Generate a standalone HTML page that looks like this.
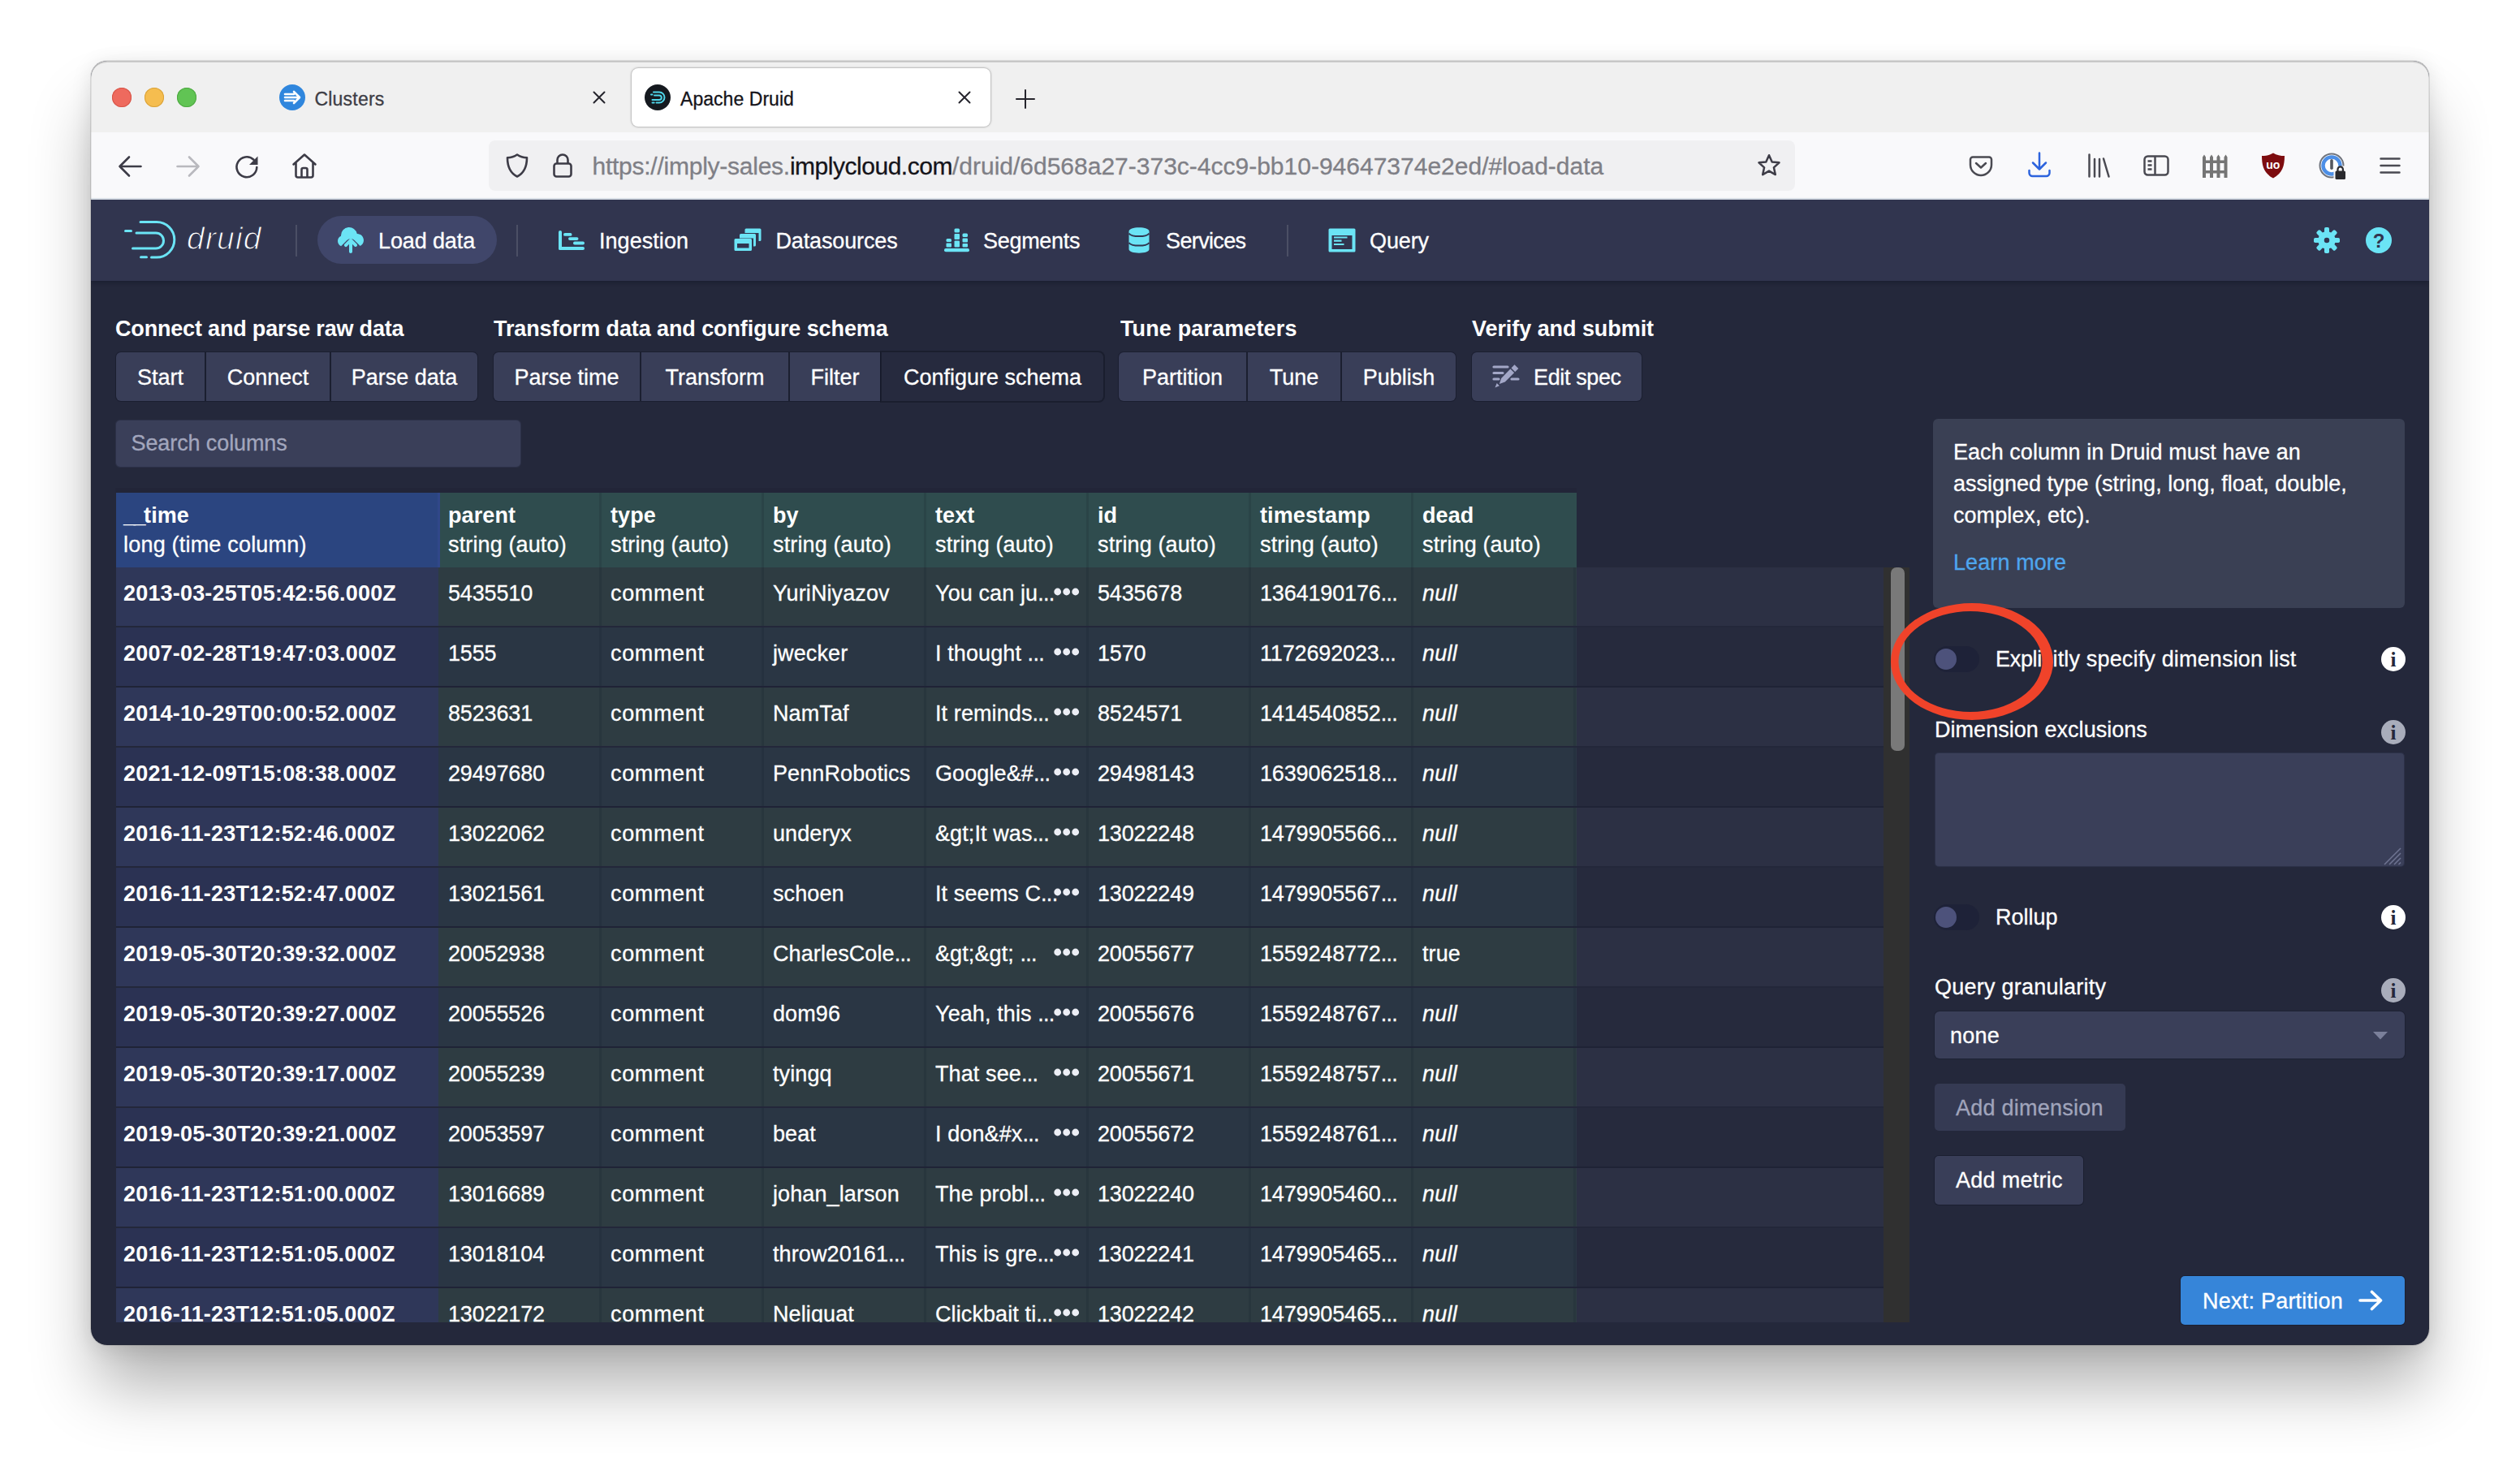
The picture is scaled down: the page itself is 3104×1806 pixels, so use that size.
<!DOCTYPE html>
<html lang="en">
<head>
<meta charset="utf-8">
<title>Apache Druid</title>
<style>
*{box-sizing:border-box}
html,body{margin:0;padding:0}
body{width:3104px;height:1806px;background:#fff;overflow:hidden;position:relative;font-family:"Liberation Sans",sans-serif;font-size:27px;color:#fff}
.a{position:absolute}
.t{position:absolute;white-space:pre;line-height:1;-webkit-text-stroke:.3px currentColor}
.win{position:absolute;left:112px;top:75px;width:2880px;height:1582px;border-radius:20px;overflow:hidden;background:#24283b}
.shadow{position:absolute;left:112px;top:75px;width:2880px;height:1582px;border-radius:20px;box-shadow:0 0 0 1px rgba(0,0,0,.10),0 56px 80px -6px rgba(0,0,0,.31),0 4px 26px rgba(0,0,0,.11)}
.o{position:absolute;left:-112px;top:-75px;width:3104px;height:1806px}
.tabbar{left:112px;top:75px;width:2880px;height:88px;background:#f0f0f0}
.navbar{left:112px;top:163px;width:2880px;height:83px;background:#f9f9fb;border-bottom:2px solid #dfe6ee}
.chrome{font-size:23px;color:#15141a}
.hdr{left:112px;top:246px;width:2880px;height:100px;background:#31354f;box-shadow:0 2px 5px rgba(10,12,25,.35)}
.btn{position:absolute;height:60px;top:433px;background:#393e58;border-radius:4px;box-shadow:0 0 0 1px rgba(16,22,38,.45)}
.btn .t{top:17px}
</style>
</head>
<body>
<div class="shadow"></div>
<div class="win"><div class="o">

<!-- ===== browser chrome ===== -->
<div class="a tabbar"></div>
<div class="a navbar"></div>
<div class="a" style="left:138px;top:108px;width:24px;height:24px;border-radius:50%;background:#ee6a5e;box-shadow:inset 0 0 0 1px #d65548"></div>
<div class="a" style="left:178px;top:108px;width:24px;height:24px;border-radius:50%;background:#f5bd4f;box-shadow:inset 0 0 0 1px #d9a23a"></div>
<div class="a" style="left:218px;top:108px;width:24px;height:24px;border-radius:50%;background:#61c454;box-shadow:inset 0 0 0 1px #4ea842"></div>
<svg class="a" style="left:344px;top:104px" width="32" height="32" viewBox="0 0 32 32"><circle cx="16" cy="16" r="16" fill="#2f86dd"/><g stroke="#fff" stroke-width="2.6" stroke-linecap="round" stroke-linejoin="round" fill="none"><path d="M7 12h11M7 16h17M7 20h11M18 9l7 7-7 7"/></g></svg>
<div class="t chrome" style="left:387.5px;top:111.2px;font-size:23px;color:#3d3d45;letter-spacing:0.2px;">Clusters</div>
<svg class="a" style="left:729.5px;top:112px;" width="16" height="16" viewBox="0 0 16 16"><path d="M1.5 1.5l13 13M14.5 1.5l-13 13" stroke="#26252d" stroke-width="2" stroke-linecap="round" fill="none"/></svg>
<div class="a" style="left:778px;top:84px;width:442px;height:72px;border-radius:8px;background:#fff;box-shadow:0 0 3px rgba(0,0,0,.38),0 0 0 1px rgba(0,0,0,.05)"></div>
<svg class="a" style="left:793.5px;top:104px" width="32" height="32" viewBox="0 0 32 32"><circle cx="16" cy="16" r="16" fill="#15191f"/><g stroke="#4fd6ea" stroke-width="2" stroke-linecap="round" fill="none"><path d="M11 9.5h7a6.5 6.5 0 0 1 0 13h-3.500M8 12.500h1.500M12 13.500h6a2.800 2.800 0 0 1 0 5.600H9.500M9.500 22.500h2.200"/></g></svg>
<div class="t chrome" style="left:838px;top:111.2px;font-size:23px;color:#15141a;letter-spacing:0.05px;">Apache Druid</div>
<svg class="a" style="left:1180px;top:112px;" width="16" height="16" viewBox="0 0 16 16"><path d="M1.5 1.5l13 13M14.5 1.5l-13 13" stroke="#26252d" stroke-width="2" stroke-linecap="round" fill="none"/></svg>
<svg class="a" style="left:1251px;top:109.5px;" width="24" height="24" viewBox="0 0 24 24"><path d="M12 1v22M1 12h22" stroke="#26252d" stroke-width="2" stroke-linecap="round" fill="none"/></svg>
<svg class="a" style="left:144px;top:189px" width="32" height="32" viewBox="0 0 32 32"><path d="M29.500 16H3.500M15 4.500L3.500 16 15 27.500" stroke="#3d3c47" stroke-width="2.600" stroke-linecap="round" stroke-linejoin="round" fill="none"/></svg>
<svg class="a" style="left:216px;top:189px" width="32" height="32" viewBox="0 0 32 32"><path d="M2.500 16h26M17 4.500L28.500 16 17 27.500" stroke="#b9b9be" stroke-width="2.600" stroke-linecap="round" stroke-linejoin="round" fill="none"/></svg>
<svg class="a" style="left:288px;top:189px" width="32" height="32" viewBox="0 0 32 32"><path d="M28.300 17A12.400 12.400 0 1 1 24.500 7.800" stroke="#3d3c47" stroke-width="2.600" stroke-linecap="round" fill="none"/><path d="M29.500 3.500v10.500h-10.500z" fill="#3d3c47"/></svg>
<svg class="a" style="left:359px;top:188px" width="32" height="32" viewBox="0 0 32 32"><path d="M2.500 14.500L16 2.500l13.500 12M5.500 12.500v15.500a2.500 2.500 0 0 0 2.500 2.500h16a2.500 2.500 0 0 0 2.500-2.500V12.500M12.500 30.500v-9.500a2 2 0 0 1 2-2h3a2 2 0 0 1 2 2v9.500" stroke="#3d3c47" stroke-width="2.600" stroke-linecap="round" stroke-linejoin="round" fill="none"/></svg>
<div class="a" style="left:602px;top:173px;width:1609px;height:62px;border-radius:8px;background:#f0f0f2"></div>
<svg class="a" style="left:621px;top:188px" width="32" height="32" viewBox="0 0 32 32"><path d="M16 2.500c4 2.800 8 3.700 12 3.800 0 10.500-2.500 18.500-12 23.200C6.500 24.800 4 16.800 4 6.300c4-.1 8-1 12-3.800z" stroke="#3d3c47" stroke-width="2.600" stroke-linejoin="round" fill="none"/></svg>
<svg class="a" style="left:676.5px;top:188px" width="32" height="32" viewBox="0 0 32 32"><rect x="5.500" y="13.500" width="21" height="16" rx="3" stroke="#3d3c47" stroke-width="2.600" fill="none"/><path d="M9.500 13.500V9a6.500 6.500 0 0 1 13 0v4.500" stroke="#3d3c47" stroke-width="2.600" fill="none"/></svg>
<div class="t chrome" style="left:729.5px;top:189.8px;font-size:30px;"><span style="color:#7f7f86;letter-spacing:-.25px">https://imply-sales.</span><span style="color:#15141a;letter-spacing:-.48px">implycloud.com</span><span style="color:#7f7f86">/druid/6d568a27-373c-4cc9-bb10-94647374e2ed/#load-data</span></div>
<svg class="a" style="left:2163px;top:188px" width="32" height="32" viewBox="0 0 32 32"><path d="M16 3.200l3.700 8.200 8.800.9-6.600 6 1.900 8.800L16 22.600l-7.800 4.500 1.900-8.800-6.600-6 8.800-.9z" stroke="#3d3c47" stroke-width="2.500" stroke-linejoin="round" fill="none"/></svg>
<svg class="a" style="left:2424px;top:188px" width="32" height="32" viewBox="0 0 32 32"><path d="M6 5.500h20a3 3 0 0 1 3 3v6.500a13 13 0 0 1-26 0V8.500a3 3 0 0 1 3-3z" stroke="#4a4a52" stroke-width="2.500" fill="none"/><path d="M10 13l6 5.500 6-5.500" stroke="#4a4a52" stroke-width="2.500" stroke-linecap="round" stroke-linejoin="round" fill="none"/></svg>
<svg class="a" style="left:2496px;top:186px" width="32" height="34" viewBox="0 0 32 34"><path d="M16 2.500v19.500M8 14.500l8 8 8-8" stroke="#2c63dd" stroke-width="2.500" stroke-linecap="round" stroke-linejoin="round" fill="none"/><path d="M3.500 24v3a4 4 0 0 0 4 4h17a4 4 0 0 0 4-4v-3" stroke="#2c63dd" stroke-width="2.500" stroke-linecap="round" fill="none"/></svg>
<svg class="a" style="left:2569px;top:188px" width="32" height="32" viewBox="0 0 32 32"><path d="M4.500 2.500v27M11 8v21.500M17 8v21.500M22 7.500l6.500 22" stroke="#4a4a52" stroke-width="2.500" stroke-linecap="round" fill="none"/></svg>
<svg class="a" style="left:2640px;top:191px" width="32" height="26" viewBox="0 0 32 26"><rect x="1.500" y="1.500" width="29" height="23" rx="4" stroke="#4a4a52" stroke-width="2.500" fill="none"/><path d="M14.500 2v22M5.500 7.500h5M5.500 12.500h5M5.500 17.500h5" stroke="#4a4a52" stroke-width="2.500" fill="none"/></svg>
<svg class="a" style="left:2712px;top:190px" width="32" height="30" viewBox="0 0 32 30"><g fill="#757575"><path d="M1 3.500L3 .5l2 3V29H1zM10 3.500l2-3 2 3V29h-4zM18.500 3.500l2-3 2 3V29h-4zM27.500 3.500l2-3 2 3V29h-4z"/><rect x="1" y="7.500" width="30" height="3.500"/><rect x="1" y="20" width="30" height="3.500"/></g></svg>
<svg class="a" style="left:2785px;top:188px" width="30" height="32" viewBox="0 0 30 32"><path d="M15 .5c4.500 2.800 9 3.600 14 3.600 0 12-2.500 21.500-14 27.400C3.500 25.600 1 16.100 1 4.100c5 0 9.500-.8 14-3.600z" fill="#7d0c0f"/><text x="14.800" y="19.800" text-anchor="middle" style="font-family:Liberation Sans,sans-serif" font-weight="700" font-size="14" fill="#fff">uo</text></svg>
<svg class="a" style="left:2855px;top:187px" width="36" height="36" viewBox="0 0 36 36"><circle cx="17" cy="17" r="14.500" stroke="#6f737c" stroke-width="2" fill="#fff"/><circle cx="17" cy="17" r="10.500" stroke="#4d8fe6" stroke-width="4.500" fill="#fff"/><rect x="15.200" y="9" width="3.600" height="13" rx="1.800" fill="#55585f"/><rect x="19.500" y="17.500" width="16" height="17" fill="#f9f9fb"/><rect x="21.500" y="23.500" width="12.500" height="10.500" rx="1.500" fill="#2a2a2e"/><path d="M24.500 24v-2.500a3.200 3.200 0 0 1 6.400 0V24" stroke="#2a2a2e" stroke-width="2.200" fill="none"/></svg>
<svg class="a" style="left:2931px;top:193px" width="26" height="22" viewBox="0 0 26 22"><path d="M1.500 2.500h23M1.500 11h23M1.500 19.500h23" stroke="#4a4a52" stroke-width="2.500" stroke-linecap="round" fill="none"/></svg>

<!-- ===== druid header ===== -->
<div class="a hdr"></div>
<svg class="a" style="left:150px;top:268px" width="72" height="54" viewBox="0 0 72 54"><g stroke="#6be4f5" stroke-width="3" stroke-linecap="round" fill="none"><path d="M23 5.500h20a21.800 21.800 0 0 1 0 43.600H36.500"/><path d="M18 19h24a9.500 9.500 0 0 1 0 19H13.500"/><path d="M4.500 16.500h7"/><path d="M23.500 48.800h7"/></g></svg>
<div class="t" style="left:230px;top:274.2px;font-size:39px;color:#fff;font-style:italic;letter-spacing:1.2px;-webkit-text-stroke:1.1px #31354f;">druid</div>
<div class="a" style="left:364px;top:277px;width:2px;height:39px;background:rgba(255,255,255,.13);"></div>
<div class="a" style="left:636px;top:277px;width:2px;height:39px;background:rgba(255,255,255,.13);"></div>
<div class="a" style="left:1585px;top:277px;width:2px;height:39px;background:rgba(255,255,255,.13);"></div>
<div class="a" style="left:391px;top:266px;width:221px;height:59px;background:#40466a;border-radius:30px;"></div>
<svg class="a" style="left:416px;top:280px" width="32" height="32" viewBox="0 0 16 16"><path fill="#6be4f5" d="M8.710 7.290C8.530 7.110 8.280 7 8 7s-.530.110-.710.290l-3 3a1.003 1.003 0 0 0 1.420 1.420L7 10.410V15c0 .550.450 1 1 1s1-.450 1-1v-4.590l1.290 1.290c.180.190.430.300.710.300a1.003 1.003 0 0 0 .710-1.710l-3-3zM12 4c-.030 0-.070 0-.100.010A5 5 0 0 0 2 5c0 .110.010.220.020.330A3.510 3.510 0 0 0 0 8.500c0 1.410.840 2.610 2.030 3.170L4.200 9.500c.950-.950 2.260-2.500 3.800-2.500s2.850 1.550 3.800 2.500l2.020 2.020C15.090 10.910 16 9.560 16 8c0-2.210-1.790-4-4-4z"/></svg>
<div class="t" style="left:466px;top:283.9px;letter-spacing:-0.12px;">Load data</div>
<svg class="a" style="left:688px;top:280px" width="32" height="32" viewBox="0 0 32 32"><g fill="#6be4f5"><rect x="0" y="4" width="4" height="24" rx="2"/><rect x="0" y="24" width="32" height="4" rx="2"/><rect x="6" y="7" width="10.500" height="3.800" rx="1.900"/><rect x="12" y="12.200" width="12.500" height="3.800" rx="1.900"/><rect x="18" y="17.600" width="14" height="3.800" rx="1.900"/></g></svg>
<div class="t" style="left:738px;top:283.9px;letter-spacing:0.05px;">Ingestion</div>
<svg class="a" style="left:904px;top:280px" width="34" height="30" viewBox="0 0 34 30"><g fill="#6be4f5"><path d="M15 1.500h17a1.500 1.500 0 0 1 1.500 1.500v12.500a1.500 1.500 0 0 1-1.500 1.500h-1.500V7H13.500V3a1.500 1.500 0 0 1 1.500-1.500z"/><path d="M8.500 8h17a1.500 1.500 0 0 1 1.500 1.500v12.500a1.500 1.500 0 0 1-1.500 1.500h-1.500V13.500H7V9.500a1.500 1.500 0 0 1 1.500-1.500z"/><path fill-rule="evenodd" d="M2 14h18.500a1.500 1.500 0 0 1 1.500 1.500v12a1.500 1.500 0 0 1-1.500 1.500H2a1.500 1.500 0 0 1-1.500-1.500v-12A1.500 1.500 0 0 1 2 14zm2 6v5.500h14.500V20z"/></g></svg>
<div class="t" style="left:955.5px;top:283.9px;letter-spacing:-0.14px;">Datasources</div>
<svg class="a" style="left:1163px;top:280px" width="32" height="32" viewBox="0 0 32 32"><g fill="#6be4f5"><rect x="0" y="26" width="31" height="4.200" rx="2"/><rect x="2.500" y="14" width="6.500" height="4" rx="1.500"/><rect x="2.500" y="19.500" width="6.500" height="5" rx="1"/><rect x="12.500" y="1.500" width="6.500" height="5" rx="1.500"/><rect x="12.500" y="8" width="6.500" height="7" rx="1"/><rect x="12.500" y="16.500" width="6.500" height="8" rx="1"/><rect x="22.500" y="7.500" width="6.500" height="4.500" rx="1.500"/><rect x="22.500" y="13.500" width="6.500" height="5" rx="1"/><rect x="22.500" y="20" width="6.500" height="4.500" rx="1"/></g></svg>
<div class="t" style="left:1211px;top:283.9px;letter-spacing:-0.3px;">Segments</div>
<svg class="a" style="left:1390px;top:280px" width="26" height="32" viewBox="0 0 26 32"><path fill="#6be4f5" d="M.500 5C.500 2.200 6 .300 13 .300S25.500 2.200 25.500 5v22c0 2.800-5.500 4.700-12.500 4.700S.500 29.800.500 27z"/><path d="M.500 7.500c2 2.600 7 3.600 12.500 3.600s10.500-1 12.500-3.600M.500 19c2 2.600 7 3.600 12.500 3.600s10.500-1 12.500-3.600" stroke="#31354f" stroke-width="2" fill="none"/></svg>
<div class="t" style="left:1436px;top:283.9px;letter-spacing:-0.63px;">Services</div>
<svg class="a" style="left:1636px;top:281px" width="34" height="30" viewBox="0 0 34 30"><path fill="#6be4f5" fill-rule="evenodd" d="M2 .500h30a1.500 1.500 0 0 1 1.500 1.500v26a1.500 1.500 0 0 1-1.500 1.500H2A1.500 1.500 0 0 1 .500 28V2A1.500 1.500 0 0 1 2 .500zM4.500 9v17h25V9z"/><path d="M7 11.500h16.500M7 15.700h9.500M7 20h12.500" stroke="#6be4f5" stroke-width="2.200" fill="none"/></svg>
<div class="t" style="left:1687px;top:283.9px;letter-spacing:-0.11px;">Query</div>
<svg class="a" style="left:2850px;top:280px" width="32" height="32" viewBox="0 0 32 32"><g fill="#6be4f5"><rect x="13" y="0" width="6" height="8" rx="1.800" transform="rotate(0 16 16)"/><rect x="13" y="0" width="6" height="8" rx="1.800" transform="rotate(45 16 16)"/><rect x="13" y="0" width="6" height="8" rx="1.800" transform="rotate(90 16 16)"/><rect x="13" y="0" width="6" height="8" rx="1.800" transform="rotate(135 16 16)"/><rect x="13" y="0" width="6" height="8" rx="1.800" transform="rotate(180 16 16)"/><rect x="13" y="0" width="6" height="8" rx="1.800" transform="rotate(225 16 16)"/><rect x="13" y="0" width="6" height="8" rx="1.800" transform="rotate(270 16 16)"/><rect x="13" y="0" width="6" height="8" rx="1.800" transform="rotate(315 16 16)"/></g><circle cx="16" cy="16" r="7" stroke="#6be4f5" stroke-width="7.500" fill="none"/></svg>
<svg class="a" style="left:2914px;top:280px" width="32" height="32" viewBox="0 0 32 32"><circle cx="16" cy="16" r="16" fill="#6be4f5"/><text x="16" y="24.500" text-anchor="middle" style="font-family:Liberation Sans,sans-serif" font-weight="700" font-size="24" fill="#31354f">?</text></svg>

<!-- ===== steps ===== -->
<div class="t" style="left:142px;top:392.3px;font-weight:700;-webkit-text-stroke:0;letter-spacing:-0.18px;">Connect and parse raw data</div>
<div class="t" style="left:608px;top:392.3px;font-weight:700;-webkit-text-stroke:0;letter-spacing:-0.1px;">Transform data and configure schema</div>
<div class="t" style="left:1380px;top:392.3px;font-weight:700;-webkit-text-stroke:0;letter-spacing:0.13px;">Tune parameters</div>
<div class="t" style="left:1813px;top:392.3px;font-weight:700;-webkit-text-stroke:0;letter-spacing:-0.06px;">Verify and submit</div>
<div class="a" style="left:143px;top:434px;width:109px;height:60px;background:#393e58;border-radius:6px 0 0 6px;box-shadow:0 0 0 1px rgba(20,24,40,.55);text-align:center;line-height:60px;white-space:pre"><span style="position:relative;top:1px;-webkit-text-stroke:.3px #fff">Start</span></div>
<div class="a" style="left:254px;top:434px;width:152px;height:60px;background:#393e58;border-radius:0;box-shadow:0 0 0 1px rgba(20,24,40,.55);text-align:center;line-height:60px;white-space:pre"><span style="position:relative;top:1px;-webkit-text-stroke:.3px #fff">Connect</span></div>
<div class="a" style="left:408px;top:434px;width:180px;height:60px;background:#393e58;border-radius:0 6px 6px 0;box-shadow:0 0 0 1px rgba(20,24,40,.55);text-align:center;line-height:60px;white-space:pre"><span style="position:relative;top:1px;-webkit-text-stroke:.3px #fff">Parse data</span></div>
<div class="a" style="left:608px;top:434px;width:180px;height:60px;background:#393e58;border-radius:6px 0 0 6px;box-shadow:0 0 0 1px rgba(20,24,40,.55);text-align:center;line-height:60px;white-space:pre"><span style="position:relative;top:1px;-webkit-text-stroke:.3px #fff">Parse time</span></div>
<div class="a" style="left:790px;top:434px;width:181px;height:60px;background:#393e58;border-radius:0;box-shadow:0 0 0 1px rgba(20,24,40,.55);text-align:center;line-height:60px;white-space:pre"><span style="position:relative;top:1px;-webkit-text-stroke:.3px #fff">Transform</span></div>
<div class="a" style="left:973px;top:434px;width:111px;height:60px;background:#393e58;border-radius:0;box-shadow:0 0 0 1px rgba(20,24,40,.55);text-align:center;line-height:60px;white-space:pre"><span style="position:relative;top:1px;-webkit-text-stroke:.3px #fff">Filter</span></div>
<div class="a" style="left:1086px;top:434px;width:273px;height:60px;background:#262a3e;border-radius:0 6px 6px 0;box-shadow:0 0 0 2px rgba(16,20,34,.5);text-align:center;line-height:60px;white-space:pre"><span style="position:relative;top:1px;-webkit-text-stroke:.3px #fff">Configure schema</span></div>
<div class="a" style="left:1378px;top:434px;width:157px;height:60px;background:#393e58;border-radius:6px 0 0 6px;box-shadow:0 0 0 1px rgba(20,24,40,.55);text-align:center;line-height:60px;white-space:pre"><span style="position:relative;top:1px;-webkit-text-stroke:.3px #fff">Partition</span></div>
<div class="a" style="left:1537px;top:434px;width:114px;height:60px;background:#393e58;border-radius:0;box-shadow:0 0 0 1px rgba(20,24,40,.55);text-align:center;line-height:60px;white-space:pre"><span style="position:relative;top:1px;-webkit-text-stroke:.3px #fff">Tune</span></div>
<div class="a" style="left:1653px;top:434px;width:140px;height:60px;background:#393e58;border-radius:0 6px 6px 0;box-shadow:0 0 0 1px rgba(20,24,40,.55);text-align:center;line-height:60px;white-space:pre"><span style="position:relative;top:1px;-webkit-text-stroke:.3px #fff">Publish</span></div>
<div class="a" style="left:1813px;top:434px;width:209px;height:60px;background:#393e58;border-radius:6px;box-shadow:0 0 0 1px rgba(20,24,40,.55)"></div>
<svg class="a" style="left:1838px;top:448px" width="34" height="32" viewBox="0 0 34 32"><g stroke="#a3a7c7" stroke-width="3.200" stroke-linecap="round" fill="none"><path d="M2 4h17M2 11.500h11M2 19h6M24 19h8"/></g><path fill="#a3a7c7" d="M27.500 1.200l4.800 4.800-16.500 16.500-7 2.600 2.400-7.200z"/><path d="M22.500 5.500l5.500 5.500" stroke="#393e58" stroke-width="1.600"/><path fill="#a3a7c7" d="M3.500 29.500l2.200-5.500 3.200 3.200z"/></svg>
<div class="t" style="left:1889px;top:452.3px;letter-spacing:-0.37px;">Edit spec</div>
<div class="a" style="left:142px;top:517px;width:500px;height:59px;background:#3a3f59;border-radius:6px;box-shadow:inset 0 0 0 1px rgba(20,24,40,.35);"></div>
<div class="t" style="left:161.5px;top:533.3px;color:#a2a6bd;letter-spacing:-0.1px;">Search columns</div>

<!-- ===== table ===== -->
<div class="a" style="left:142px;top:601px;width:1800px;height:6px;background:rgba(20,24,40,.13);"></div>
<div class="a" style="left:143px;top:607px;width:399px;height:92px;background:#2b4580;"></div>
<div class="a" style="left:542px;top:607px;width:1400px;height:92px;background:#2f4c4e;"></div>
<div class="a" style="left:539px;top:607px;width:3px;height:92px;background:#314789;"></div>
<div class="t" style="left:152px;top:622.3px;font-weight:700;-webkit-text-stroke:0;letter-spacing:0.1px;"><span style="letter-spacing:-2.500px">__</span>time</div>
<div class="t" style="left:152px;top:658.3px;letter-spacing:0.2px;">long (time column)</div>
<div class="a" style="left:738px;top:607px;width:3px;height:92px;background:rgba(20,30,40,.16);"></div>
<div class="t" style="left:552px;top:622.3px;font-weight:700;-webkit-text-stroke:0;letter-spacing:0.1px;">parent</div>
<div class="t" style="left:552px;top:658.3px;letter-spacing:0.13px;">string (auto)</div>
<div class="a" style="left:938px;top:607px;width:3px;height:92px;background:rgba(20,30,40,.16);"></div>
<div class="t" style="left:752px;top:622.3px;font-weight:700;-webkit-text-stroke:0;letter-spacing:0.1px;">type</div>
<div class="t" style="left:752px;top:658.3px;letter-spacing:0.13px;">string (auto)</div>
<div class="a" style="left:1138px;top:607px;width:3px;height:92px;background:rgba(20,30,40,.16);"></div>
<div class="t" style="left:952px;top:622.3px;font-weight:700;-webkit-text-stroke:0;letter-spacing:0.1px;">by</div>
<div class="t" style="left:952px;top:658.3px;letter-spacing:0.13px;">string (auto)</div>
<div class="a" style="left:1338px;top:607px;width:3px;height:92px;background:rgba(20,30,40,.16);"></div>
<div class="t" style="left:1152px;top:622.3px;font-weight:700;-webkit-text-stroke:0;letter-spacing:0.1px;">text</div>
<div class="t" style="left:1152px;top:658.3px;letter-spacing:0.13px;">string (auto)</div>
<div class="a" style="left:1538px;top:607px;width:3px;height:92px;background:rgba(20,30,40,.16);"></div>
<div class="t" style="left:1352px;top:622.3px;font-weight:700;-webkit-text-stroke:0;letter-spacing:0.1px;">id</div>
<div class="t" style="left:1352px;top:658.3px;letter-spacing:0.13px;">string (auto)</div>
<div class="a" style="left:1738px;top:607px;width:3px;height:92px;background:rgba(20,30,40,.16);"></div>
<div class="t" style="left:1552px;top:622.3px;font-weight:700;-webkit-text-stroke:0;letter-spacing:0.1px;">timestamp</div>
<div class="t" style="left:1552px;top:658.3px;letter-spacing:0.13px;">string (auto)</div>

<div class="t" style="left:1752px;top:622.3px;font-weight:700;-webkit-text-stroke:0;letter-spacing:0.1px;">dead</div>
<div class="t" style="left:1752px;top:658.3px;letter-spacing:0.13px;">string (auto)</div>
<div class="a" style="left:142px;top:699px;width:2210px;height:930px;overflow:hidden;background:#222a3e">
<div class="a" style="left:0;top:0px;width:2178px;height:74px;background:#2c3044;border-bottom:2px solid rgba(18,24,42,.34)">
<div class="a" style="left:0;top:0;width:400px;height:72px;background:#2f3759"></div>
<div class="a" style="left:400px;top:0;width:1400px;height:72px;background:#2e3c42"></div>
<div class="a" style="left:398px;top:0;width:2px;height:72px;background:#2e3c42"></div>
<div class="a" style="left:596px;top:0;width:3px;height:72px;background:rgba(20,30,44,.2)"></div>
<div class="a" style="left:796px;top:0;width:3px;height:72px;background:rgba(20,30,44,.2)"></div>
<div class="a" style="left:996px;top:0;width:3px;height:72px;background:rgba(20,30,44,.2)"></div>
<div class="a" style="left:1196px;top:0;width:3px;height:72px;background:rgba(20,30,44,.2)"></div>
<div class="a" style="left:1396px;top:0;width:3px;height:72px;background:rgba(20,30,44,.2)"></div>
<div class="a" style="left:1596px;top:0;width:3px;height:72px;background:rgba(20,30,44,.2)"></div>
<div class="a" style="left:1796px;top:0;width:3px;height:72px;background:rgba(20,30,44,.2)"></div>
<div class="t" style="left:10px;top:18.8px;font-weight:700;-webkit-text-stroke:0;letter-spacing:0.18px;">2013-03-25T05:42:56.000Z</div>
<div class="t" style="left:410px;top:18.8px;letter-spacing:-0.15px;">5435510</div>
<div class="t" style="left:610px;top:18.8px;letter-spacing:0.65px;">comment</div>
<div class="t" style="left:810px;top:18.8px;letter-spacing:0.1px;">YuriNiyazov</div>
<div class="t" style="left:1010px;top:18.8px;letter-spacing:0.1px;">You can ju<span style="letter-spacing:-.7px">...</span></div>
<svg class="a" style="left:1156px;top:24.500px" width="32" height="10" viewBox="0 0 32 10"><g fill="#eceef5"><circle cx="4.700" cy="5" r="4.400"/><circle cx="15.700" cy="5" r="4.400"/><circle cx="26.700" cy="5" r="4.400"/></g></svg>
<div class="t" style="left:1210px;top:18.8px;letter-spacing:-0.15px;">5435678</div>
<div class="t" style="left:1410px;top:18.8px;letter-spacing:-0.15px;">1364190176<span style="letter-spacing:-.7px">...</span></div>
<div class="t" style="left:1610px;top:18.8px;letter-spacing:0.2px;font-style:italic;">null</div>
</div>
<div class="a" style="left:0;top:74px;width:2178px;height:74px;background:#262a3d;border-bottom:2px solid rgba(18,24,42,.34)">
<div class="a" style="left:0;top:0;width:400px;height:72px;background:#2b3253"></div>
<div class="a" style="left:400px;top:0;width:1400px;height:72px;background:#2a3644"></div>
<div class="a" style="left:398px;top:0;width:2px;height:72px;background:#2a3644"></div>
<div class="a" style="left:596px;top:0;width:3px;height:72px;background:rgba(20,30,44,.2)"></div>
<div class="a" style="left:796px;top:0;width:3px;height:72px;background:rgba(20,30,44,.2)"></div>
<div class="a" style="left:996px;top:0;width:3px;height:72px;background:rgba(20,30,44,.2)"></div>
<div class="a" style="left:1196px;top:0;width:3px;height:72px;background:rgba(20,30,44,.2)"></div>
<div class="a" style="left:1396px;top:0;width:3px;height:72px;background:rgba(20,30,44,.2)"></div>
<div class="a" style="left:1596px;top:0;width:3px;height:72px;background:rgba(20,30,44,.2)"></div>
<div class="a" style="left:1796px;top:0;width:3px;height:72px;background:rgba(20,30,44,.2)"></div>
<div class="t" style="left:10px;top:18.8px;font-weight:700;-webkit-text-stroke:0;letter-spacing:0.18px;">2007-02-28T19:47:03.000Z</div>
<div class="t" style="left:410px;top:18.8px;letter-spacing:-0.15px;">1555</div>
<div class="t" style="left:610px;top:18.8px;letter-spacing:0.65px;">comment</div>
<div class="t" style="left:810px;top:18.8px;letter-spacing:0.1px;">jwecker</div>
<div class="t" style="left:1010px;top:18.8px;letter-spacing:0.1px;">I thought <span style="letter-spacing:-.7px">...</span></div>
<svg class="a" style="left:1156px;top:24.500px" width="32" height="10" viewBox="0 0 32 10"><g fill="#eceef5"><circle cx="4.700" cy="5" r="4.400"/><circle cx="15.700" cy="5" r="4.400"/><circle cx="26.700" cy="5" r="4.400"/></g></svg>
<div class="t" style="left:1210px;top:18.8px;letter-spacing:-0.15px;">1570</div>
<div class="t" style="left:1410px;top:18.8px;letter-spacing:-0.15px;">1172692023<span style="letter-spacing:-.7px">...</span></div>
<div class="t" style="left:1610px;top:18.8px;letter-spacing:0.2px;font-style:italic;">null</div>
</div>
<div class="a" style="left:0;top:148px;width:2178px;height:74px;background:#2c3044;border-bottom:2px solid rgba(18,24,42,.34)">
<div class="a" style="left:0;top:0;width:400px;height:72px;background:#2f3759"></div>
<div class="a" style="left:400px;top:0;width:1400px;height:72px;background:#2e3c42"></div>
<div class="a" style="left:398px;top:0;width:2px;height:72px;background:#2e3c42"></div>
<div class="a" style="left:596px;top:0;width:3px;height:72px;background:rgba(20,30,44,.2)"></div>
<div class="a" style="left:796px;top:0;width:3px;height:72px;background:rgba(20,30,44,.2)"></div>
<div class="a" style="left:996px;top:0;width:3px;height:72px;background:rgba(20,30,44,.2)"></div>
<div class="a" style="left:1196px;top:0;width:3px;height:72px;background:rgba(20,30,44,.2)"></div>
<div class="a" style="left:1396px;top:0;width:3px;height:72px;background:rgba(20,30,44,.2)"></div>
<div class="a" style="left:1596px;top:0;width:3px;height:72px;background:rgba(20,30,44,.2)"></div>
<div class="a" style="left:1796px;top:0;width:3px;height:72px;background:rgba(20,30,44,.2)"></div>
<div class="t" style="left:10px;top:18.8px;font-weight:700;-webkit-text-stroke:0;letter-spacing:0.18px;">2014-10-29T00:00:52.000Z</div>
<div class="t" style="left:410px;top:18.8px;letter-spacing:-0.15px;">8523631</div>
<div class="t" style="left:610px;top:18.8px;letter-spacing:0.65px;">comment</div>
<div class="t" style="left:810px;top:18.8px;letter-spacing:0.1px;">NamTaf</div>
<div class="t" style="left:1010px;top:18.8px;letter-spacing:0.1px;">It reminds<span style="letter-spacing:-.7px">...</span></div>
<svg class="a" style="left:1156px;top:24.500px" width="32" height="10" viewBox="0 0 32 10"><g fill="#eceef5"><circle cx="4.700" cy="5" r="4.400"/><circle cx="15.700" cy="5" r="4.400"/><circle cx="26.700" cy="5" r="4.400"/></g></svg>
<div class="t" style="left:1210px;top:18.8px;letter-spacing:-0.15px;">8524571</div>
<div class="t" style="left:1410px;top:18.8px;letter-spacing:-0.15px;">1414540852<span style="letter-spacing:-.7px">...</span></div>
<div class="t" style="left:1610px;top:18.8px;letter-spacing:0.2px;font-style:italic;">null</div>
</div>
<div class="a" style="left:0;top:222px;width:2178px;height:74px;background:#262a3d;border-bottom:2px solid rgba(18,24,42,.34)">
<div class="a" style="left:0;top:0;width:400px;height:72px;background:#2b3253"></div>
<div class="a" style="left:400px;top:0;width:1400px;height:72px;background:#2a3644"></div>
<div class="a" style="left:398px;top:0;width:2px;height:72px;background:#2a3644"></div>
<div class="a" style="left:596px;top:0;width:3px;height:72px;background:rgba(20,30,44,.2)"></div>
<div class="a" style="left:796px;top:0;width:3px;height:72px;background:rgba(20,30,44,.2)"></div>
<div class="a" style="left:996px;top:0;width:3px;height:72px;background:rgba(20,30,44,.2)"></div>
<div class="a" style="left:1196px;top:0;width:3px;height:72px;background:rgba(20,30,44,.2)"></div>
<div class="a" style="left:1396px;top:0;width:3px;height:72px;background:rgba(20,30,44,.2)"></div>
<div class="a" style="left:1596px;top:0;width:3px;height:72px;background:rgba(20,30,44,.2)"></div>
<div class="a" style="left:1796px;top:0;width:3px;height:72px;background:rgba(20,30,44,.2)"></div>
<div class="t" style="left:10px;top:18.8px;font-weight:700;-webkit-text-stroke:0;letter-spacing:0.18px;">2021-12-09T15:08:38.000Z</div>
<div class="t" style="left:410px;top:18.8px;letter-spacing:-0.15px;">29497680</div>
<div class="t" style="left:610px;top:18.8px;letter-spacing:0.65px;">comment</div>
<div class="t" style="left:810px;top:18.8px;letter-spacing:0.1px;">PennRobotics</div>
<div class="t" style="left:1010px;top:18.8px;letter-spacing:0.1px;">Google&amp;#<span style="letter-spacing:-.7px">...</span></div>
<svg class="a" style="left:1156px;top:24.500px" width="32" height="10" viewBox="0 0 32 10"><g fill="#eceef5"><circle cx="4.700" cy="5" r="4.400"/><circle cx="15.700" cy="5" r="4.400"/><circle cx="26.700" cy="5" r="4.400"/></g></svg>
<div class="t" style="left:1210px;top:18.8px;letter-spacing:-0.15px;">29498143</div>
<div class="t" style="left:1410px;top:18.8px;letter-spacing:-0.15px;">1639062518<span style="letter-spacing:-.7px">...</span></div>
<div class="t" style="left:1610px;top:18.8px;letter-spacing:0.2px;font-style:italic;">null</div>
</div>
<div class="a" style="left:0;top:296px;width:2178px;height:74px;background:#2c3044;border-bottom:2px solid rgba(18,24,42,.34)">
<div class="a" style="left:0;top:0;width:400px;height:72px;background:#2f3759"></div>
<div class="a" style="left:400px;top:0;width:1400px;height:72px;background:#2e3c42"></div>
<div class="a" style="left:398px;top:0;width:2px;height:72px;background:#2e3c42"></div>
<div class="a" style="left:596px;top:0;width:3px;height:72px;background:rgba(20,30,44,.2)"></div>
<div class="a" style="left:796px;top:0;width:3px;height:72px;background:rgba(20,30,44,.2)"></div>
<div class="a" style="left:996px;top:0;width:3px;height:72px;background:rgba(20,30,44,.2)"></div>
<div class="a" style="left:1196px;top:0;width:3px;height:72px;background:rgba(20,30,44,.2)"></div>
<div class="a" style="left:1396px;top:0;width:3px;height:72px;background:rgba(20,30,44,.2)"></div>
<div class="a" style="left:1596px;top:0;width:3px;height:72px;background:rgba(20,30,44,.2)"></div>
<div class="a" style="left:1796px;top:0;width:3px;height:72px;background:rgba(20,30,44,.2)"></div>
<div class="t" style="left:10px;top:18.8px;font-weight:700;-webkit-text-stroke:0;letter-spacing:0.18px;">2016-11-23T12:52:46.000Z</div>
<div class="t" style="left:410px;top:18.8px;letter-spacing:-0.15px;">13022062</div>
<div class="t" style="left:610px;top:18.8px;letter-spacing:0.65px;">comment</div>
<div class="t" style="left:810px;top:18.8px;letter-spacing:0.1px;">underyx</div>
<div class="t" style="left:1010px;top:18.8px;letter-spacing:0.1px;">&amp;gt;It was<span style="letter-spacing:-.7px">...</span></div>
<svg class="a" style="left:1156px;top:24.500px" width="32" height="10" viewBox="0 0 32 10"><g fill="#eceef5"><circle cx="4.700" cy="5" r="4.400"/><circle cx="15.700" cy="5" r="4.400"/><circle cx="26.700" cy="5" r="4.400"/></g></svg>
<div class="t" style="left:1210px;top:18.8px;letter-spacing:-0.15px;">13022248</div>
<div class="t" style="left:1410px;top:18.8px;letter-spacing:-0.15px;">1479905566<span style="letter-spacing:-.7px">...</span></div>
<div class="t" style="left:1610px;top:18.8px;letter-spacing:0.2px;font-style:italic;">null</div>
</div>
<div class="a" style="left:0;top:370px;width:2178px;height:74px;background:#262a3d;border-bottom:2px solid rgba(18,24,42,.34)">
<div class="a" style="left:0;top:0;width:400px;height:72px;background:#2b3253"></div>
<div class="a" style="left:400px;top:0;width:1400px;height:72px;background:#2a3644"></div>
<div class="a" style="left:398px;top:0;width:2px;height:72px;background:#2a3644"></div>
<div class="a" style="left:596px;top:0;width:3px;height:72px;background:rgba(20,30,44,.2)"></div>
<div class="a" style="left:796px;top:0;width:3px;height:72px;background:rgba(20,30,44,.2)"></div>
<div class="a" style="left:996px;top:0;width:3px;height:72px;background:rgba(20,30,44,.2)"></div>
<div class="a" style="left:1196px;top:0;width:3px;height:72px;background:rgba(20,30,44,.2)"></div>
<div class="a" style="left:1396px;top:0;width:3px;height:72px;background:rgba(20,30,44,.2)"></div>
<div class="a" style="left:1596px;top:0;width:3px;height:72px;background:rgba(20,30,44,.2)"></div>
<div class="a" style="left:1796px;top:0;width:3px;height:72px;background:rgba(20,30,44,.2)"></div>
<div class="t" style="left:10px;top:18.8px;font-weight:700;-webkit-text-stroke:0;letter-spacing:0.18px;">2016-11-23T12:52:47.000Z</div>
<div class="t" style="left:410px;top:18.8px;letter-spacing:-0.15px;">13021561</div>
<div class="t" style="left:610px;top:18.8px;letter-spacing:0.65px;">comment</div>
<div class="t" style="left:810px;top:18.8px;letter-spacing:0.1px;">schoen</div>
<div class="t" style="left:1010px;top:18.8px;letter-spacing:0.1px;">It seems C<span style="letter-spacing:-.7px">...</span></div>
<svg class="a" style="left:1156px;top:24.500px" width="32" height="10" viewBox="0 0 32 10"><g fill="#eceef5"><circle cx="4.700" cy="5" r="4.400"/><circle cx="15.700" cy="5" r="4.400"/><circle cx="26.700" cy="5" r="4.400"/></g></svg>
<div class="t" style="left:1210px;top:18.8px;letter-spacing:-0.15px;">13022249</div>
<div class="t" style="left:1410px;top:18.8px;letter-spacing:-0.15px;">1479905567<span style="letter-spacing:-.7px">...</span></div>
<div class="t" style="left:1610px;top:18.8px;letter-spacing:0.2px;font-style:italic;">null</div>
</div>
<div class="a" style="left:0;top:444px;width:2178px;height:74px;background:#2c3044;border-bottom:2px solid rgba(18,24,42,.34)">
<div class="a" style="left:0;top:0;width:400px;height:72px;background:#2f3759"></div>
<div class="a" style="left:400px;top:0;width:1400px;height:72px;background:#2e3c42"></div>
<div class="a" style="left:398px;top:0;width:2px;height:72px;background:#2e3c42"></div>
<div class="a" style="left:596px;top:0;width:3px;height:72px;background:rgba(20,30,44,.2)"></div>
<div class="a" style="left:796px;top:0;width:3px;height:72px;background:rgba(20,30,44,.2)"></div>
<div class="a" style="left:996px;top:0;width:3px;height:72px;background:rgba(20,30,44,.2)"></div>
<div class="a" style="left:1196px;top:0;width:3px;height:72px;background:rgba(20,30,44,.2)"></div>
<div class="a" style="left:1396px;top:0;width:3px;height:72px;background:rgba(20,30,44,.2)"></div>
<div class="a" style="left:1596px;top:0;width:3px;height:72px;background:rgba(20,30,44,.2)"></div>
<div class="a" style="left:1796px;top:0;width:3px;height:72px;background:rgba(20,30,44,.2)"></div>
<div class="t" style="left:10px;top:18.8px;font-weight:700;-webkit-text-stroke:0;letter-spacing:0.18px;">2019-05-30T20:39:32.000Z</div>
<div class="t" style="left:410px;top:18.8px;letter-spacing:-0.15px;">20052938</div>
<div class="t" style="left:610px;top:18.8px;letter-spacing:0.65px;">comment</div>
<div class="t" style="left:810px;top:18.8px;letter-spacing:0.1px;">CharlesCole<span style="letter-spacing:-.7px">...</span></div>
<div class="t" style="left:1010px;top:18.8px;letter-spacing:0.1px;">&amp;gt;&amp;gt; <span style="letter-spacing:-.7px">...</span></div>
<svg class="a" style="left:1156px;top:24.500px" width="32" height="10" viewBox="0 0 32 10"><g fill="#eceef5"><circle cx="4.700" cy="5" r="4.400"/><circle cx="15.700" cy="5" r="4.400"/><circle cx="26.700" cy="5" r="4.400"/></g></svg>
<div class="t" style="left:1210px;top:18.8px;letter-spacing:-0.15px;">20055677</div>
<div class="t" style="left:1410px;top:18.8px;letter-spacing:-0.15px;">1559248772<span style="letter-spacing:-.7px">...</span></div>
<div class="t" style="left:1610px;top:18.8px;letter-spacing:0.1px;">true</div>
</div>
<div class="a" style="left:0;top:518px;width:2178px;height:74px;background:#262a3d;border-bottom:2px solid rgba(18,24,42,.34)">
<div class="a" style="left:0;top:0;width:400px;height:72px;background:#2b3253"></div>
<div class="a" style="left:400px;top:0;width:1400px;height:72px;background:#2a3644"></div>
<div class="a" style="left:398px;top:0;width:2px;height:72px;background:#2a3644"></div>
<div class="a" style="left:596px;top:0;width:3px;height:72px;background:rgba(20,30,44,.2)"></div>
<div class="a" style="left:796px;top:0;width:3px;height:72px;background:rgba(20,30,44,.2)"></div>
<div class="a" style="left:996px;top:0;width:3px;height:72px;background:rgba(20,30,44,.2)"></div>
<div class="a" style="left:1196px;top:0;width:3px;height:72px;background:rgba(20,30,44,.2)"></div>
<div class="a" style="left:1396px;top:0;width:3px;height:72px;background:rgba(20,30,44,.2)"></div>
<div class="a" style="left:1596px;top:0;width:3px;height:72px;background:rgba(20,30,44,.2)"></div>
<div class="a" style="left:1796px;top:0;width:3px;height:72px;background:rgba(20,30,44,.2)"></div>
<div class="t" style="left:10px;top:18.8px;font-weight:700;-webkit-text-stroke:0;letter-spacing:0.18px;">2019-05-30T20:39:27.000Z</div>
<div class="t" style="left:410px;top:18.8px;letter-spacing:-0.15px;">20055526</div>
<div class="t" style="left:610px;top:18.8px;letter-spacing:0.65px;">comment</div>
<div class="t" style="left:810px;top:18.8px;letter-spacing:0.1px;">dom96</div>
<div class="t" style="left:1010px;top:18.8px;letter-spacing:0.1px;">Yeah, this <span style="letter-spacing:-.7px">...</span></div>
<svg class="a" style="left:1156px;top:24.500px" width="32" height="10" viewBox="0 0 32 10"><g fill="#eceef5"><circle cx="4.700" cy="5" r="4.400"/><circle cx="15.700" cy="5" r="4.400"/><circle cx="26.700" cy="5" r="4.400"/></g></svg>
<div class="t" style="left:1210px;top:18.8px;letter-spacing:-0.15px;">20055676</div>
<div class="t" style="left:1410px;top:18.8px;letter-spacing:-0.15px;">1559248767<span style="letter-spacing:-.7px">...</span></div>
<div class="t" style="left:1610px;top:18.8px;letter-spacing:0.2px;font-style:italic;">null</div>
</div>
<div class="a" style="left:0;top:592px;width:2178px;height:74px;background:#2c3044;border-bottom:2px solid rgba(18,24,42,.34)">
<div class="a" style="left:0;top:0;width:400px;height:72px;background:#2f3759"></div>
<div class="a" style="left:400px;top:0;width:1400px;height:72px;background:#2e3c42"></div>
<div class="a" style="left:398px;top:0;width:2px;height:72px;background:#2e3c42"></div>
<div class="a" style="left:596px;top:0;width:3px;height:72px;background:rgba(20,30,44,.2)"></div>
<div class="a" style="left:796px;top:0;width:3px;height:72px;background:rgba(20,30,44,.2)"></div>
<div class="a" style="left:996px;top:0;width:3px;height:72px;background:rgba(20,30,44,.2)"></div>
<div class="a" style="left:1196px;top:0;width:3px;height:72px;background:rgba(20,30,44,.2)"></div>
<div class="a" style="left:1396px;top:0;width:3px;height:72px;background:rgba(20,30,44,.2)"></div>
<div class="a" style="left:1596px;top:0;width:3px;height:72px;background:rgba(20,30,44,.2)"></div>
<div class="a" style="left:1796px;top:0;width:3px;height:72px;background:rgba(20,30,44,.2)"></div>
<div class="t" style="left:10px;top:18.8px;font-weight:700;-webkit-text-stroke:0;letter-spacing:0.18px;">2019-05-30T20:39:17.000Z</div>
<div class="t" style="left:410px;top:18.8px;letter-spacing:-0.15px;">20055239</div>
<div class="t" style="left:610px;top:18.8px;letter-spacing:0.65px;">comment</div>
<div class="t" style="left:810px;top:18.8px;letter-spacing:0.1px;">tyingq</div>
<div class="t" style="left:1010px;top:18.8px;letter-spacing:0.1px;">That see<span style="letter-spacing:-.7px">...</span></div>
<svg class="a" style="left:1156px;top:24.500px" width="32" height="10" viewBox="0 0 32 10"><g fill="#eceef5"><circle cx="4.700" cy="5" r="4.400"/><circle cx="15.700" cy="5" r="4.400"/><circle cx="26.700" cy="5" r="4.400"/></g></svg>
<div class="t" style="left:1210px;top:18.8px;letter-spacing:-0.15px;">20055671</div>
<div class="t" style="left:1410px;top:18.8px;letter-spacing:-0.15px;">1559248757<span style="letter-spacing:-.7px">...</span></div>
<div class="t" style="left:1610px;top:18.8px;letter-spacing:0.2px;font-style:italic;">null</div>
</div>
<div class="a" style="left:0;top:666px;width:2178px;height:74px;background:#262a3d;border-bottom:2px solid rgba(18,24,42,.34)">
<div class="a" style="left:0;top:0;width:400px;height:72px;background:#2b3253"></div>
<div class="a" style="left:400px;top:0;width:1400px;height:72px;background:#2a3644"></div>
<div class="a" style="left:398px;top:0;width:2px;height:72px;background:#2a3644"></div>
<div class="a" style="left:596px;top:0;width:3px;height:72px;background:rgba(20,30,44,.2)"></div>
<div class="a" style="left:796px;top:0;width:3px;height:72px;background:rgba(20,30,44,.2)"></div>
<div class="a" style="left:996px;top:0;width:3px;height:72px;background:rgba(20,30,44,.2)"></div>
<div class="a" style="left:1196px;top:0;width:3px;height:72px;background:rgba(20,30,44,.2)"></div>
<div class="a" style="left:1396px;top:0;width:3px;height:72px;background:rgba(20,30,44,.2)"></div>
<div class="a" style="left:1596px;top:0;width:3px;height:72px;background:rgba(20,30,44,.2)"></div>
<div class="a" style="left:1796px;top:0;width:3px;height:72px;background:rgba(20,30,44,.2)"></div>
<div class="t" style="left:10px;top:18.8px;font-weight:700;-webkit-text-stroke:0;letter-spacing:0.18px;">2019-05-30T20:39:21.000Z</div>
<div class="t" style="left:410px;top:18.8px;letter-spacing:-0.15px;">20053597</div>
<div class="t" style="left:610px;top:18.8px;letter-spacing:0.65px;">comment</div>
<div class="t" style="left:810px;top:18.8px;letter-spacing:0.1px;">beat</div>
<div class="t" style="left:1010px;top:18.8px;letter-spacing:0.1px;">I don&amp;#x<span style="letter-spacing:-.7px">...</span></div>
<svg class="a" style="left:1156px;top:24.500px" width="32" height="10" viewBox="0 0 32 10"><g fill="#eceef5"><circle cx="4.700" cy="5" r="4.400"/><circle cx="15.700" cy="5" r="4.400"/><circle cx="26.700" cy="5" r="4.400"/></g></svg>
<div class="t" style="left:1210px;top:18.8px;letter-spacing:-0.15px;">20055672</div>
<div class="t" style="left:1410px;top:18.8px;letter-spacing:-0.15px;">1559248761<span style="letter-spacing:-.7px">...</span></div>
<div class="t" style="left:1610px;top:18.8px;letter-spacing:0.2px;font-style:italic;">null</div>
</div>
<div class="a" style="left:0;top:740px;width:2178px;height:74px;background:#2c3044;border-bottom:2px solid rgba(18,24,42,.34)">
<div class="a" style="left:0;top:0;width:400px;height:72px;background:#2f3759"></div>
<div class="a" style="left:400px;top:0;width:1400px;height:72px;background:#2e3c42"></div>
<div class="a" style="left:398px;top:0;width:2px;height:72px;background:#2e3c42"></div>
<div class="a" style="left:596px;top:0;width:3px;height:72px;background:rgba(20,30,44,.2)"></div>
<div class="a" style="left:796px;top:0;width:3px;height:72px;background:rgba(20,30,44,.2)"></div>
<div class="a" style="left:996px;top:0;width:3px;height:72px;background:rgba(20,30,44,.2)"></div>
<div class="a" style="left:1196px;top:0;width:3px;height:72px;background:rgba(20,30,44,.2)"></div>
<div class="a" style="left:1396px;top:0;width:3px;height:72px;background:rgba(20,30,44,.2)"></div>
<div class="a" style="left:1596px;top:0;width:3px;height:72px;background:rgba(20,30,44,.2)"></div>
<div class="a" style="left:1796px;top:0;width:3px;height:72px;background:rgba(20,30,44,.2)"></div>
<div class="t" style="left:10px;top:18.8px;font-weight:700;-webkit-text-stroke:0;letter-spacing:0.18px;">2016-11-23T12:51:00.000Z</div>
<div class="t" style="left:410px;top:18.8px;letter-spacing:-0.15px;">13016689</div>
<div class="t" style="left:610px;top:18.8px;letter-spacing:0.65px;">comment</div>
<div class="t" style="left:810px;top:18.8px;letter-spacing:0.1px;">johan_larson</div>
<div class="t" style="left:1010px;top:18.8px;letter-spacing:0.1px;">The probl<span style="letter-spacing:-.7px">...</span></div>
<svg class="a" style="left:1156px;top:24.500px" width="32" height="10" viewBox="0 0 32 10"><g fill="#eceef5"><circle cx="4.700" cy="5" r="4.400"/><circle cx="15.700" cy="5" r="4.400"/><circle cx="26.700" cy="5" r="4.400"/></g></svg>
<div class="t" style="left:1210px;top:18.8px;letter-spacing:-0.15px;">13022240</div>
<div class="t" style="left:1410px;top:18.8px;letter-spacing:-0.15px;">1479905460<span style="letter-spacing:-.7px">...</span></div>
<div class="t" style="left:1610px;top:18.8px;letter-spacing:0.2px;font-style:italic;">null</div>
</div>
<div class="a" style="left:0;top:814px;width:2178px;height:74px;background:#262a3d;border-bottom:2px solid rgba(18,24,42,.34)">
<div class="a" style="left:0;top:0;width:400px;height:72px;background:#2b3253"></div>
<div class="a" style="left:400px;top:0;width:1400px;height:72px;background:#2a3644"></div>
<div class="a" style="left:398px;top:0;width:2px;height:72px;background:#2a3644"></div>
<div class="a" style="left:596px;top:0;width:3px;height:72px;background:rgba(20,30,44,.2)"></div>
<div class="a" style="left:796px;top:0;width:3px;height:72px;background:rgba(20,30,44,.2)"></div>
<div class="a" style="left:996px;top:0;width:3px;height:72px;background:rgba(20,30,44,.2)"></div>
<div class="a" style="left:1196px;top:0;width:3px;height:72px;background:rgba(20,30,44,.2)"></div>
<div class="a" style="left:1396px;top:0;width:3px;height:72px;background:rgba(20,30,44,.2)"></div>
<div class="a" style="left:1596px;top:0;width:3px;height:72px;background:rgba(20,30,44,.2)"></div>
<div class="a" style="left:1796px;top:0;width:3px;height:72px;background:rgba(20,30,44,.2)"></div>
<div class="t" style="left:10px;top:18.8px;font-weight:700;-webkit-text-stroke:0;letter-spacing:0.18px;">2016-11-23T12:51:05.000Z</div>
<div class="t" style="left:410px;top:18.8px;letter-spacing:-0.15px;">13018104</div>
<div class="t" style="left:610px;top:18.8px;letter-spacing:0.65px;">comment</div>
<div class="t" style="left:810px;top:18.8px;letter-spacing:0.1px;">throw20161<span style="letter-spacing:-.7px">...</span></div>
<div class="t" style="left:1010px;top:18.8px;letter-spacing:0.1px;">This is gre<span style="letter-spacing:-.7px">...</span></div>
<svg class="a" style="left:1156px;top:24.500px" width="32" height="10" viewBox="0 0 32 10"><g fill="#eceef5"><circle cx="4.700" cy="5" r="4.400"/><circle cx="15.700" cy="5" r="4.400"/><circle cx="26.700" cy="5" r="4.400"/></g></svg>
<div class="t" style="left:1210px;top:18.8px;letter-spacing:-0.15px;">13022241</div>
<div class="t" style="left:1410px;top:18.8px;letter-spacing:-0.15px;">1479905465<span style="letter-spacing:-.7px">...</span></div>
<div class="t" style="left:1610px;top:18.8px;letter-spacing:0.2px;font-style:italic;">null</div>
</div>
<div class="a" style="left:0;top:888px;width:2178px;height:74px;background:#2c3044;border-bottom:2px solid rgba(18,24,42,.34)">
<div class="a" style="left:0;top:0;width:400px;height:72px;background:#2f3759"></div>
<div class="a" style="left:400px;top:0;width:1400px;height:72px;background:#2e3c42"></div>
<div class="a" style="left:398px;top:0;width:2px;height:72px;background:#2e3c42"></div>
<div class="a" style="left:596px;top:0;width:3px;height:72px;background:rgba(20,30,44,.2)"></div>
<div class="a" style="left:796px;top:0;width:3px;height:72px;background:rgba(20,30,44,.2)"></div>
<div class="a" style="left:996px;top:0;width:3px;height:72px;background:rgba(20,30,44,.2)"></div>
<div class="a" style="left:1196px;top:0;width:3px;height:72px;background:rgba(20,30,44,.2)"></div>
<div class="a" style="left:1396px;top:0;width:3px;height:72px;background:rgba(20,30,44,.2)"></div>
<div class="a" style="left:1596px;top:0;width:3px;height:72px;background:rgba(20,30,44,.2)"></div>
<div class="a" style="left:1796px;top:0;width:3px;height:72px;background:rgba(20,30,44,.2)"></div>
<div class="t" style="left:10px;top:18.8px;font-weight:700;-webkit-text-stroke:0;letter-spacing:0.18px;">2016-11-23T12:51:05.000Z</div>
<div class="t" style="left:410px;top:18.8px;letter-spacing:-0.15px;">13022172</div>
<div class="t" style="left:610px;top:18.8px;letter-spacing:0.65px;">comment</div>
<div class="t" style="left:810px;top:18.8px;letter-spacing:0.1px;">Neliquat</div>
<div class="t" style="left:1010px;top:18.8px;letter-spacing:0.1px;">Clickbait ti<span style="letter-spacing:-.7px">...</span></div>
<svg class="a" style="left:1156px;top:24.500px" width="32" height="10" viewBox="0 0 32 10"><g fill="#eceef5"><circle cx="4.700" cy="5" r="4.400"/><circle cx="15.700" cy="5" r="4.400"/><circle cx="26.700" cy="5" r="4.400"/></g></svg>
<div class="t" style="left:1210px;top:18.8px;letter-spacing:-0.15px;">13022242</div>
<div class="t" style="left:1410px;top:18.8px;letter-spacing:-0.15px;">1479905465<span style="letter-spacing:-.7px">...</span></div>
<div class="t" style="left:1610px;top:18.8px;letter-spacing:0.2px;font-style:italic;">null</div>
</div>
<div class="a" style="left:0;top:0;width:1px;height:930px;background:#24283b"></div>
<div class="a" style="left:2178px;top:-2px;width:32px;height:932px;background:#303030"></div>
<div class="a" style="left:2187px;top:0px;width:17px;height:226px;border-radius:7px;background:#797979"></div>
</div>

<!-- ===== right panel ===== -->
<div class="a" style="left:2381px;top:516px;width:581px;height:233px;background:#3a4054;border-radius:6px;"></div>
<div class="t" style="left:2406px;top:544.3px;letter-spacing:0.05px;">Each column in Druid must have an</div>
<div class="t" style="left:2406px;top:583.3px;">assigned type (string, long, float, double,</div>
<div class="t" style="left:2406px;top:622.3px;letter-spacing:0.05px;">complex, etc).</div>
<div class="t" style="left:2406px;top:680.3px;color:#4ea6ee;letter-spacing:0.1px;">Learn more</div>
<div class="a" style="left:2382px;top:796px;width:56px;height:32px;background:#1e2238;border-radius:16px;"></div><div class="a" style="left:2384px;top:799px;width:26px;height:26px;border-radius:50%;background:#4d527b"></div>
<div class="t" style="left:2458px;top:799.3px;"><span style="letter-spacing:-.3px">Expli</span>c<span style="letter-spacing:.16px">itly specify dimension list</span></div>
<svg class="a" style="left:2933px;top:797px" width="30" height="30" viewBox="0 0 30 30"><circle cx="15" cy="15" r="15" fill="#fff"/><text x="15" y="24" text-anchor="middle" style="font-family:Liberation Serif,serif" font-weight="700" font-size="25" fill="#24283b">i</text></svg>
<div class="t" style="left:2383px;top:886.3px;letter-spacing:0.04px;">Dimension exclusions</div>
<svg class="a" style="left:2933px;top:887px" width="30" height="30" viewBox="0 0 30 30"><circle cx="15" cy="15" r="15" fill="#a9adbb"/><text x="15" y="24" text-anchor="middle" style="font-family:Liberation Serif,serif" font-weight="700" font-size="25" fill="#24283b">i</text></svg>
<div class="a" style="left:2383px;top:927px;width:579px;height:141px;background:#3a3f59;border-radius:5px;box-shadow:inset 0 0 0 1px rgba(20,24,40,.35);"></div>
<svg class="a" style="left:2934px;top:1042px" width="24" height="24" viewBox="0 0 24 24"><path d="M23 3L3 23M23 9L9 23M23 15L15 23M23 20.500L20.500 23" stroke="#6e7391" stroke-width="1.600" fill="none"/></svg>
<div class="a" style="left:2382px;top:1114px;width:56px;height:32px;background:#1e2238;border-radius:16px;"></div><div class="a" style="left:2384px;top:1117px;width:26px;height:26px;border-radius:50%;background:#4d527b"></div>
<div class="t" style="left:2458px;top:1117.3px;">Rollup</div>
<svg class="a" style="left:2933px;top:1115px" width="30" height="30" viewBox="0 0 30 30"><circle cx="15" cy="15" r="15" fill="#fff"/><text x="15" y="24" text-anchor="middle" style="font-family:Liberation Serif,serif" font-weight="700" font-size="25" fill="#24283b">i</text></svg>
<div class="t" style="left:2383px;top:1203.3px;letter-spacing:0.25px;">Query granularity</div>
<svg class="a" style="left:2933px;top:1205px" width="30" height="30" viewBox="0 0 30 30"><circle cx="15" cy="15" r="15" fill="#a9adbb"/><text x="15" y="24" text-anchor="middle" style="font-family:Liberation Serif,serif" font-weight="700" font-size="25" fill="#24283b">i</text></svg>
<div class="a" style="left:2383px;top:1246px;width:579px;height:58px;background:#3a3f59;border-radius:6px;box-shadow:0 0 0 1px rgba(20,24,40,.4);"></div>
<div class="t" style="left:2402px;top:1263.3px;letter-spacing:0.2px;">none</div>
<svg class="a" style="left:2922px;top:1270px" width="20" height="11" viewBox="0 0 20 11"><path d="M1 1h18l-9 9.500z" fill="#7b809b"/></svg>
<div class="a" style="left:2383px;top:1335px;width:235px;height:58px;background:#353a53;border-radius:5px;"></div>
<div class="t" style="left:2409px;top:1351.8px;color:#a0a4bb;letter-spacing:0.24px;">Add dimension</div>
<div class="a" style="left:2383px;top:1424px;width:183px;height:60px;background:#393e58;border-radius:5px;box-shadow:0 0 0 1px rgba(20,24,40,.55);"></div>
<div class="t" style="left:2409px;top:1441.3px;letter-spacing:0.28px;">Add metric</div>
<div class="a" style="left:2686px;top:1572px;width:276px;height:60px;background:#3685d9;border-radius:5px;box-shadow:0 0 0 1px rgba(20,24,40,.5);"></div>
<div class="t" style="left:2713px;top:1590.3px;letter-spacing:0.23px;">Next: Partition</div>
<svg class="a" style="left:2905px;top:1589px" width="30" height="26" viewBox="0 0 30 26"><path d="M2 13h25M16.500 2.500L27.500 13 16.500 23.500" stroke="#fff" stroke-width="3.600" stroke-linecap="round" stroke-linejoin="round" fill="none"/></svg>

</div></div>
<div class="a" style="left:112px;top:75px;width:2880px;height:1582px;border-radius:20px;box-shadow:inset 0 2px 0 0 rgba(0,0,0,.13),inset 0 0 0 1px rgba(0,0,0,.07)"></div>
<svg class="a" style="left:2300.800px;top:720px" width="260" height="190" viewBox="0 0 260 190"><path fill="#f0432a" fill-rule="evenodd" d="M28 95a100 72 0 1 0 200 0a100 72 0 1 0 -200 0zM37.500 95a88.500 62 0 1 0 177 0a88.500 62 0 1 0 -177 0z"/></svg>
</body>
</html>
